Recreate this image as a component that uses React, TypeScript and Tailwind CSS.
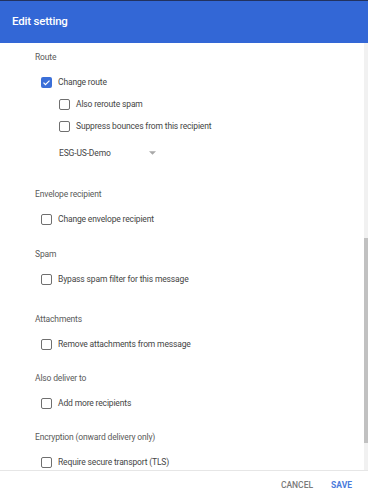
import React from "react";

type Item = { label: string; checked?: boolean };

function Checkbox({ checked }: { checked?: boolean }) {
    if (checked) {
        return (
            <span className="w-[11px] h-[11px] rounded-[2px] bg-[#3b6fd8] flex items-center justify-center shrink-0">
                <svg viewBox="0 0 12 12" className="w-[9px] h-[9px]">
                    <path d="M2 6.2l2.6 2.6L10 3.4" fill="none" stroke="#fff" strokeWidth="1.6" />
                </svg>
            </span>
        );
    }
    return <span className="w-[11px] h-[11px] rounded-[2px] border-[1.5px] border-[#6f6f6f] shrink-0" />;
}

function Row({ label, checked, indent }: Item & { indent?: boolean }) {
    return (
        <div className={`h-[22px] flex items-center gap-[6px] ${indent ? "pl-[24px]" : "pl-[6px]"}`}>
            <Checkbox checked={checked} />
            <span className="text-[8.5px] tracking-[-0.15px] text-[#454545]">{label}</span>
        </div>
    );
}

function Label({ text, className = "" }: { text: string; className?: string }) {
    return (
        <div className={`h-[24px] flex items-center text-[8.5px] tracking-[-0.15px] text-[#5a5a5a] ${className}`}>
            {text}
        </div>
    );
}

function Section({ title, option, mt }: { title: string; option: string; mt: string }) {
    return (
        <div className={mt}>
            <Label text={title} />
            <div className="mt-[2px]">
                <Row label={option} />
            </div>
        </div>
    );
}

export default function App() {
    return (
        <div className="w-[368px] h-[500px] flex flex-col bg-white overflow-hidden" style={{ fontFamily: "Roboto, 'Noto Sans', sans-serif" }}>
            {/* Header */}
            <div className="h-[43px] shrink-0 border-t border-[#22325f] bg-[#3367d6] flex items-center px-[12px]">
                <span className="text-white text-[11.5px] tracking-[-0.2px] font-medium">Edit setting</span>
            </div>

            {/* Body */}
            <div className="flex-1 flex min-h-0">
                <div className="flex-1 overflow-hidden pt-[2px] pl-[35px]">
                    <Label text="Route" />
                    <div className="mt-[2px]">
                        <Row label="Change route" checked />
                        <Row label="Also reroute spam" indent />
                        <Row label="Suppress bounces from this recipient" indent />
                        <div className="h-[32px] flex items-center pl-[24px]">
                            <span className="text-[8.5px] tracking-[-0.15px] text-[#454545] w-[90px]">ESG-US-Demo</span>
                            <svg viewBox="0 0 6 3" className="w-[7px] h-[4px]">
                                <path d="M0 0h6L3 3z" fill="#a8a8a8" />
                            </svg>
                        </div>
                    </div>
                    <Section title="Envelope recipient" option="Change envelope recipient" mt="mt-[13px]" />
                    <Section title="Spam" option="Bypass spam filter for this message" mt="mt-[12px]" />
                    <Section title="Attachments" option="Remove attachments from message" mt="mt-[17px]" />
                    <Section title="Also deliver to" option="Add more recipients" mt="mt-[11px]" />
                    <Section title="Encryption (onward delivery only)" option="Require secure transport (TLS)" mt="mt-[11px]" />
                </div>
                {/* Scrollbar */}
                <div className="w-[4px] bg-[#f1f1f1] flex flex-col">
                    <div className="mt-[195px] h-[205px] bg-[#c1c1c1]" />
                </div>
            </div>

            {/* Footer */}
            <div className="h-[30px] shrink-0 border-t border-[#e6e6e6] flex items-center justify-end gap-[18px] pr-[16px]">
                <span className="text-[8.5px] font-medium text-[#7a7a7a]">CANCEL</span>
                <span className="text-[8.5px] font-bold text-[#4a7bdc]">SAVE</span>
            </div>
        </div>
    );
}
